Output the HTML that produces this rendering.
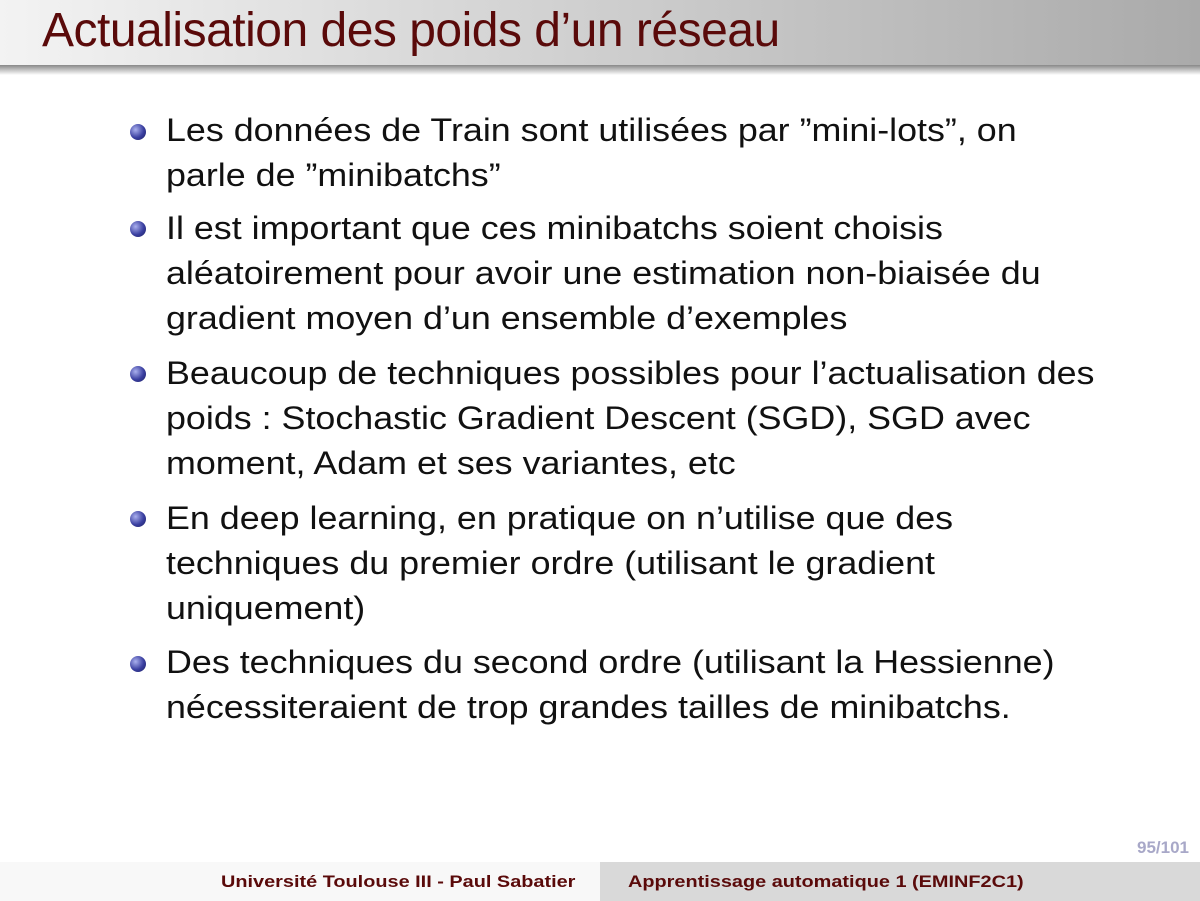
<!DOCTYPE html>
<html><head><meta charset="utf-8"><style>
body{margin:0;width:1200px;height:901px;position:relative;background:#fff;font-family:"Liberation Sans",sans-serif;overflow:hidden}
.tb{position:absolute;left:0;top:0;width:1200px;height:65px;background:linear-gradient(90deg,#f3f3f3,#aaaaaa)}
.sh{position:absolute;left:0;top:65px;width:1200px;height:10px;background:linear-gradient(#888,#fff)}
.t{position:absolute;left:42px;top:3px;font-size:48px;line-height:56px;color:#5a0a0a;white-space:nowrap;letter-spacing:-0.5px}
.it{position:absolute;left:166px;font-size:32px;line-height:45px;color:#111;white-space:nowrap;transform:scaleX(1.12);transform-origin:left}
.b{position:absolute;left:130px;width:16px;height:16px;border-radius:50%;background:radial-gradient(circle at 35% 35%,#aab0ee,#3a3fa0 55%,#1a1d60)}
.f1{position:absolute;left:0;top:862px;width:600px;height:39px;background:#f8f8f8}
.f2{position:absolute;left:600px;top:862px;width:600px;height:39px;background:#d9d9d9}
.ft{position:absolute;top:872px;font-size:17px;font-weight:bold;color:#5a0a0a;white-space:nowrap;transform:scaleX(1.17);transform-origin:left}
</style></head><body>
<div class="tb"></div><div class="sh"></div>
<div class="t">Actualisation des poids d’un réseau</div>
<div class="b" style="top:124px"></div>
<div class="it" style="top:108px">Les données de Train sont utilisées par ”mini-lots”, on<br>parle de ”minibatchs”</div>
<div class="b" style="top:221px"></div>
<div class="it" style="top:206px">Il est important que ces minibatchs soient choisis<br>aléatoirement pour avoir une estimation non-biaisée du<br>gradient moyen d’un ensemble d’exemples</div>
<div class="b" style="top:366px"></div>
<div class="it" style="top:351px">Beaucoup de techniques possibles pour l’actualisation des<br>poids : Stochastic Gradient Descent (SGD), SGD avec<br>moment, Adam et ses variantes, etc</div>
<div class="b" style="top:511px"></div>
<div class="it" style="top:496px">En deep learning, en pratique on n’utilise que des<br>techniques du premier ordre (utilisant le gradient<br>uniquement)</div>
<div class="b" style="top:656px"></div>
<div class="it" style="top:640px">Des techniques du second ordre (utilisant la Hessienne)<br>nécessiteraient de trop grandes tailles de minibatchs.</div>
<div class="f1"></div><div class="f2"></div>
<div style="position:absolute;right:11px;top:838px;font-size:17px;font-weight:bold;color:#a8a8c8">95/101</div>
<div class="ft" style="left:221px">Université Toulouse III - Paul Sabatier</div>
<div class="ft" style="left:628px">Apprentissage automatique 1 (EMINF2C1)</div>
</body></html>
